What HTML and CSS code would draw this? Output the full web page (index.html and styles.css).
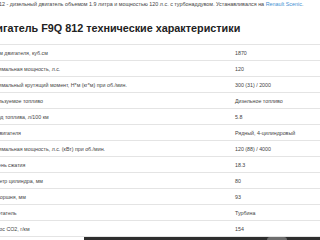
FILE: index.html
```html
<!DOCTYPE html>
<html lang="ru">
<head>
<meta charset="utf-8">
<link rel="stylesheet" href="styles.css">
</head>
<body>
<div class="page">
  <p class="intro">F9Q 812 - дизельный двигатель объемом 1.9 литра и мощностью 120 л.с. с турбонаддувом. Устанавливался на <a href="#">Renault Scenic</a>.</p>
  <h1 class="title">Двигатель F9Q 812 технические характеристики</h1>
  <table class="specs">
    <tr><td class="label">Объем двигателя, куб.см</td><td class="value">1870</td></tr>
    <tr><td class="label">Максимальная мощность, л.с.</td><td class="value">120</td></tr>
    <tr><td class="label">Максимальный крутящий момент, Н*м (кг*м) при об./мин.</td><td class="value">300 (31) / 2000</td></tr>
    <tr><td class="label">Используемое топливо</td><td class="value">Дизельное топливо</td></tr>
    <tr><td class="label">Расход топлива, л/100 км</td><td class="value">5.8</td></tr>
    <tr><td class="label">Тип двигателя</td><td class="value">Рядный, 4-цилиндровый</td></tr>
    <tr><td class="label">Максимальная мощность, л.с. (кВт) при об./мин.</td><td class="value">120 (88) / 4000</td></tr>
    <tr><td class="label">Степень сжатия</td><td class="value">18.3</td></tr>
    <tr><td class="label">Диаметр цилиндра, мм</td><td class="value">80</td></tr>
    <tr><td class="label">Ход поршня, мм</td><td class="value">93</td></tr>
    <tr><td class="label">Нагнетатель</td><td class="value">Турбина</td></tr>
    <tr><td class="label">Выброс CO2, г/км</td><td class="value">154</td></tr>
  </table>
</div>
<div class="bottom-bar"><span class="bar-knob"></span></div>
</body>
</html>
```

FILE: styles.css
```css
html, body {
  margin: 0;
  padding: 0;
  background: #ffffff;
  overflow: hidden;
  width: 320px;
  height: 240px;
}
body {
  font-family: "Liberation Sans", Arial, sans-serif;
  color: #333333;
  position: relative;
}
.page {
  margin-left: -16px;
  width: 360px;
}
.intro {
  margin: 0;
  padding-top: 1px;
  font-size: 5.4px;
  line-height: 6px;
  color: #444444;
  white-space: nowrap;
}
.intro a {
  color: #3f8fd2;
  text-decoration: none;
}
.title {
  margin: 15px 0 0 -2px;
  font-size: 10.8px;
  line-height: 13px;
  font-weight: bold;
  color: #222222;
  white-space: nowrap;
}
.specs {
  margin-top: 9px;
  border-collapse: collapse;
  width: 360px;
  font-size: 5.3px;
  color: #444444;
}
.specs td {
  border-top: 1px solid #e4e4e4;
  border-bottom: 1px solid #e4e4e4;
  height: 15px;
  padding: 0 2px;
  vertical-align: middle;
  white-space: nowrap;
}
.specs .label {
  width: 245px;
}
.bottom-bar {
  position: absolute;
  left: 84px;
  right: 0;
  top: 237px;
  height: 3px;
  background: #2e2e2e;
}
.bar-knob {
  position: absolute;
  left: 183px;
  top: 0;
  width: 20px;
  height: 3px;
  background: #6e6e6e;
  border-radius: 3px 3px 0 0;
}
```
